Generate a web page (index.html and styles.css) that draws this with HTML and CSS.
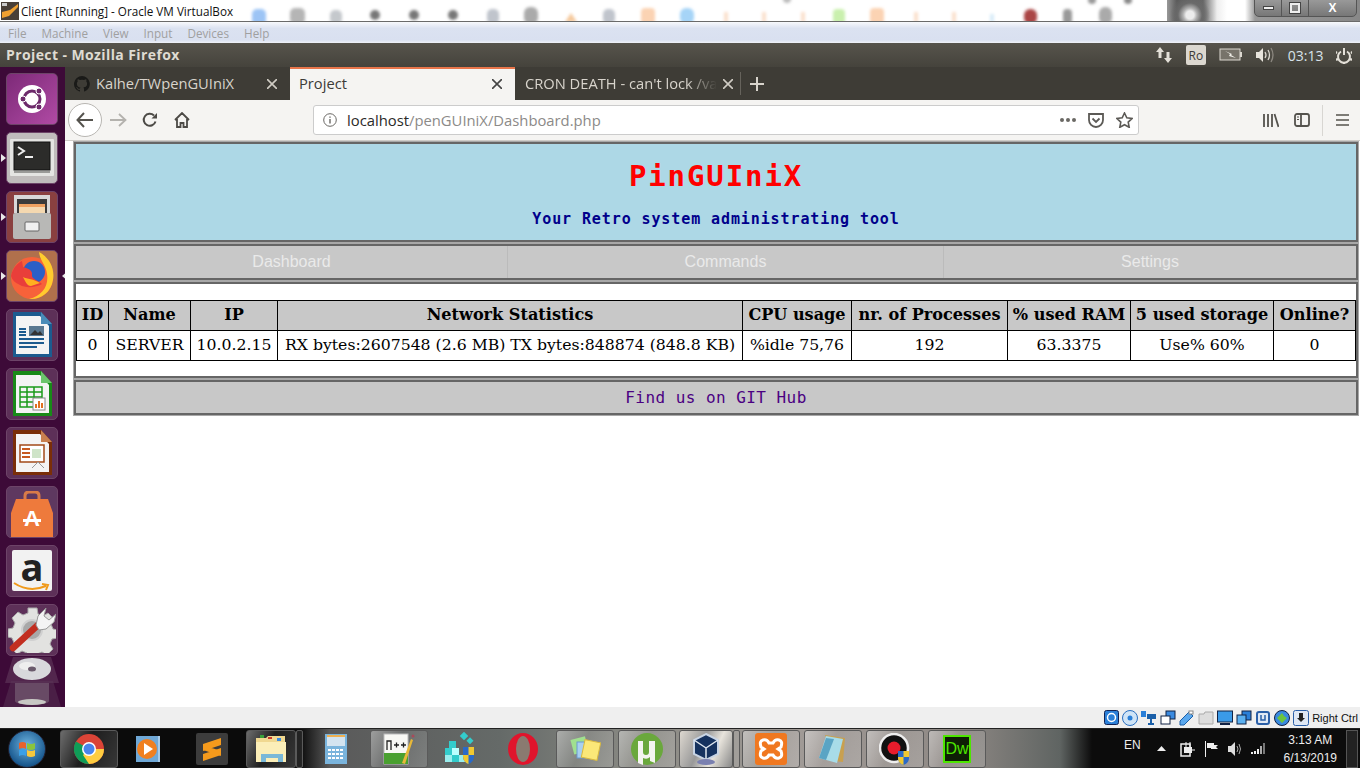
FILE: index.html
```html
<!DOCTYPE html>
<html lang="en">
<head>
    <meta charset="UTF-8">
    <meta name="viewport" content="width=device-width, initial-scale=1.0">
    <title>Project - Mozilla Firefox</title>
    <link rel="stylesheet" href="styles.css">
</head>
<body>

<!-- VirtualBox window title -->
<div class="vbox-title">
    <svg class="blur-strip" width="1130" height="22" viewBox="230 0 1130 22">
        <defs><filter id="soft"><feGaussianBlur stdDeviation="1.800"/></filter></defs>
        <g filter="url(#soft)">
            <rect x="252" y="9" width="14" height="16" rx="5" fill="#9cc4f5"/>
            <rect x="290" y="8" width="15" height="16" rx="5" fill="#b5b5b5"/>
            <rect x="330" y="10" width="12" height="14" rx="5" fill="#c4c8cc"/>
            <circle cx="375" cy="15" r="5" fill="#777"/>
            <circle cx="414" cy="15" r="5" fill="#777"/>
            <circle cx="453" cy="15" r="5" fill="#777"/>
            <rect x="487" y="9" width="12" height="15" rx="5" fill="#c0c4cc"/>
            <rect x="524" y="7" width="14" height="17" rx="6" fill="#aaa"/>
            <path d="M565 22l6-9 6 9z" fill="#f5c99c"/>
            <rect x="603" y="9" width="12" height="15" rx="5" fill="#c0c4cc"/>
            <rect x="641" y="8" width="14" height="16" rx="4" fill="#fbd3b3"/>
            <rect x="680" y="8" width="14" height="16" rx="6" fill="#a6d4f7"/>
            <rect x="724" y="12" width="4" height="10" fill="#fbe0cc"/>
            <rect x="762" y="12" width="4" height="10" fill="#fbe0cc"/>
            <rect x="801" y="12" width="4" height="10" fill="#fbe0cc"/>
            <rect x="833" y="9" width="12" height="15" rx="4" fill="#c9f0ad"/>
            <rect x="870" y="8" width="14" height="16" rx="4" fill="#fbd3b3"/>
            <rect x="914" y="12" width="4" height="10" fill="#fbe0cc"/>
            <rect x="952" y="12" width="4" height="10" fill="#fbe0cc"/>
            <rect x="990" y="14" width="4" height="8" fill="#d8ecf8"/>
            <rect x="1024" y="9" width="13" height="15" rx="6" fill="#a44"/>
            <rect x="1063" y="9" width="9" height="15" rx="4" fill="#999"/>
            <rect x="1099" y="7" width="13" height="17" rx="6" fill="#aaa"/>
            <circle cx="787" cy="-1" r="4" fill="#bbb"/>
            <circle cx="1092" cy="0" r="4" fill="#999"/>
            <circle cx="1128" cy="0" r="4" fill="#888"/>
        </g>
    </svg>
    <div class="dark-peek"></div>
    <svg class="vbox-logo" width="18" height="18" viewBox="0 0 18 18">
        <rect width="18" height="18" fill="#4a4038"/>
        <path d="M1 16l7-2 9-9v-3l-8 6-8 2z" fill="#f0a030"/>
        <rect x="1" y="1" width="5" height="3" fill="#ccc"/>
    </svg>
    <span class="vbox-title-text">Client [Running] - Oracle VM VirtualBox</span>
    <div class="win-buttons">
        <span class="win-btn win-min"><i></i></span>
        <span class="win-btn win-max"><i></i></span>
        <span class="win-btn win-close">X</span>
    </div>
</div>
<div class="vbox-menu">
    <span>File</span><span>Machine</span><span>View</span><span>Input</span><span>Devices</span><span>Help</span>
</div>

<!-- Ubuntu top panel -->
<div class="panel">
    <span class="panel-title">Project - Mozilla Firefox</span>
    <div class="panel-right">
        <svg width="18" height="18" viewBox="0 0 18 18" fill="#e4e0d8"><path d="M5 1l4 5H6.500v6h-3V6H1zM13 17l-4-5h2.500V6h3v6H17z"/></svg>
        <span class="panel-ro">Ro</span>
        <svg width="24" height="14" viewBox="0 0 24 14"><rect x="1" y="1" width="20" height="11" fill="#77736a" stroke="#dcd8d0"/><rect x="21" y="4" width="2" height="5" fill="#dcd8d0"/><path d="M6 3l7 3-1 1 5 3-7-2 1-2z" fill="#f0eee8"/></svg>
        <svg width="20" height="16" viewBox="0 0 20 16" fill="none" stroke="#dcd8d0" stroke-width="1.300"><path d="M1 5h3l4-4v14l-4-4H1z" fill="#e8e4dc" stroke="none"/><path d="M10 5q2 3 0 6M13 3q3 5 0 10"/><path d="M16 1q4 7 0 14" stroke="#8c8880"/></svg>
        <span class="panel-clock">03:13</span>
        <svg width="16" height="17" viewBox="0 0 16 17" fill="none" stroke="#e4e0d8" stroke-width="2"><path d="M5 4.500a6 6 0 1 0 6 0M8 1v7"/><path d="M8 15v2M2 12l-2 1M14 12l2 1M1 6l-2-1M15 6l2-1" stroke-width="2.500"/></svg>
    </div>
</div>

<div class="desktop">
    <!-- Unity launcher -->
    <aside class="launcher">
        <div class="tile tile-ubuntu">
            <svg width="34" height="34" viewBox="0 0 34 34"><circle cx="17" cy="17" r="14" fill="#fff"/><circle cx="17" cy="17" r="8" fill="none" stroke="#6d2a6b" stroke-width="3"/><circle cx="24" cy="9" r="3" fill="#6d2a6b" stroke="#fff"/><circle cx="8" cy="17" r="3" fill="#6d2a6b" stroke="#fff"/><circle cx="24" cy="25" r="3" fill="#6d2a6b" stroke="#fff"/></svg>
        </div>
        <div class="tile tile-term running">
            <svg width="44" height="40" viewBox="0 0 44 40"><rect x="0" y="1" width="44" height="37" rx="1" fill="#e4e4e2"/><rect x="4" y="4" width="36" height="28" fill="#2c2c2a" stroke="#111"/><rect x="4" y="33" width="36" height="2" fill="#9a9a98"/><path d="M8 9l6 4-6 4" fill="none" stroke="#eee" stroke-width="2"/><rect x="15" y="18" width="8" height="2" fill="#eee"/></svg>
        </div>
        <div class="tile tile-files running">
            <svg width="42" height="44" viewBox="0 0 42 44"><rect x="3" y="0" width="36" height="18" fill="#d8d8d8"/><rect x="6" y="4" width="30" height="14" fill="#3a3a3a"/><rect x="8" y="9" width="26" height="9" fill="#eea060"/><rect x="8" y="12" width="26" height="6" fill="#f4d8b0"/><rect x="2" y="18" width="38" height="26" rx="2" fill="#b8b8b6"/><rect x="14" y="27" width="14" height="9" rx="1" fill="#f0f0f0" stroke="#666"/></svg>
        </div>
        <div class="tile tile-firefox running active">
            <svg width="48" height="48" viewBox="0 0 48 48"><circle cx="24" cy="26" r="21" fill="#f7623a"/><path d="M31 0c11 6 16 17 14 28-2 13-13 20-24 19 13-3 20-13 18-25-1-9-7-13-8-22z" fill="#ffcb2e"/><circle cx="26" cy="20" r="11" fill="#2b5fc7"/><path d="M3 24c2-9 7-13 11-15l1 6c4 1 10 3 9 8-1 4 8 6 10 9-7 4-17 4-22 1-5-2-8-5-9-9z" fill="#e93e3a"/><path d="M15 25c4 2 11 2 17 6l-9 3c-4 0-6-5-8-9z" fill="#ffb020"/></svg>
        </div>
        <div class="tile tile-doc">
            <svg width="42" height="46" viewBox="0 0 42 46"><path d="M2 0h28l11 12v33H2z" fill="#1c5b8f"/><path d="M5 4h24l9 10v28H5z" fill="#f4f4f4"/><path d="M30 0l11 12H30z" fill="#4a8cb8"/><path d="M8 17h7M8 20h7M8 23h7M8 27h25M8 31h25M8 35h18" stroke="#1c5b8f" stroke-width="1.800"/><rect x="18" y="14" width="15" height="10" fill="#5a7890"/><path d="M19 23l5-5 3 3 2-2 3 4z" fill="#333"/></svg>
        </div>
        <div class="tile tile-calc">
            <svg width="42" height="46" viewBox="0 0 42 46"><path d="M2 0h28l11 12v33H2z" fill="#188a18"/><path d="M5 4h24l9 10v28H5z" fill="#f4f4f4"/><path d="M30 0l11 12H30z" fill="#6cc46c"/><path d="M9 16h22v20H9zM9 21h22M9 26h22M9 31h22M16 16v20M23 16v20" fill="none" stroke="#1a9a1a" stroke-width="1.500"/><rect x="22" y="27" width="12" height="12" fill="#fff" stroke="#888"/><path d="M25 37v-4M28 37v-7M31 37v-5" stroke="#e07020" stroke-width="2"/></svg>
        </div>
        <div class="tile tile-impress">
            <svg width="42" height="46" viewBox="0 0 42 46"><path d="M2 0h28l11 12v33H2z" fill="#7a2e08"/><path d="M5 4h24l9 10v28H5z" fill="#f4f4f4"/><path d="M30 0l11 12H30z" fill="#c88050"/><rect x="9" y="15" width="24" height="17" fill="#fff" stroke="#a24a18" stroke-width="1.500"/><path d="M11 19h8M11 23h8M11 27h8" stroke="#c85a20" stroke-width="2"/><rect x="21" y="19" width="9" height="9" fill="#cfe4c8"/><path d="M21 38l6-6 6 6" fill="none" stroke="#999"/></svg>
        </div>
        <div class="tile tile-store">
            <svg width="42" height="46" viewBox="0 0 42 46"><path d="M14 10V5q0-4 4-4h6q4 0 4 4v5" fill="none" stroke="#d87a48" stroke-width="3"/><path d="M5 8h32l5 14v24H0V22z" fill="#ee7a3c"/><text class="store-a" x="21" y="35" text-anchor="middle">A</text><rect x="12" y="28" width="18" height="3" fill="#fff"/></svg>
        </div>
        <div class="tile tile-amazon">
            <span class="amazon-a">a</span>
            <svg class="amazon-smile" width="38" height="10" viewBox="0 0 38 10" fill="none" stroke="#f09a1c" stroke-width="2"><path d="M1 1q15 10 32 3M29 2l6 1-2 5"/></svg>
        </div>
        <div class="tile tile-tools">
            <svg width="48" height="46" viewBox="0 0 48 46"><path d="M20 1h9l1 6 5 2 5-3 6 6-3 5 2 5 5 1v8l-6 1-2 5 3 5-6 6-5-3-5 2-1 4h-8l-1-5-5-2-5 3-6-6 3-5-2-5-4-1v-8l5-1 2-5-3-5 6-6 5 3 5-2z" fill="#e2e2e0" stroke="#aaa"/><circle cx="24" cy="23" r="10" fill="#a8a8a8" stroke="#d0d0d0" stroke-width="2"/><path d="M5 41L31 17" stroke="#c22e20" stroke-width="6.500" stroke-linecap="round"/><path d="M28 18l2-9 8-8-2 8 5 4 7-6-2 8-8 7-7 1z" fill="#f4f4f4" stroke="#999"/></svg>
        </div>
        <div class="tile-disc">
            <svg width="58" height="50" viewBox="0 0 58 50">
                <path d="M10 0h38l8 26H2z" fill="#6c4a68" opacity=".45"/>
                <path d="M8 24h42l8 26H0z" fill="#5c3a58" opacity=".45"/>
                <path d="M12 26v18a17 4 0 0 0 34 0V26" fill="#8f7f8c" opacity=".45"/>
                <ellipse cx="29" cy="12" rx="19" ry="11" fill="#d8d8dc"/>
                <ellipse cx="24" cy="9" rx="8" ry="4" fill="#eee"/>
                <ellipse cx="29" cy="12" rx="4" ry="2.500" fill="#6a5a6c"/>
                <ellipse cx="29" cy="45" rx="14" ry="3" fill="#c8c8c4"/>
            </svg>
        </div>
    </aside>

    <div class="firefox">
        <!-- Tabs -->
        <div class="tabs">
            <div class="tab">
                <svg width="16" height="16" viewBox="0 0 16 16" fill="#1a1a18"><path d="M8 0a8 8 0 0 0-2.500 15.600c.4.100.5-.2.500-.4v-1.400c-2.200.5-2.700-1-2.700-1-.4-.9-.9-1.200-.9-1.200-.7-.5.100-.5.100-.5.800.1 1.200.8 1.200.8.700 1.200 1.900.9 2.300.7.100-.5.300-.9.500-1.100-1.800-.2-3.600-.9-3.600-4 0-.9.300-1.600.8-2.100-.1-.2-.4-1 .1-2.100 0 0 .7-.2 2.200.8a7.600 7.600 0 0 1 4 0c1.500-1 2.200-.8 2.200-.8.400 1.100.2 1.900.1 2.100.5.600.8 1.300.8 2.100 0 3.100-1.900 3.700-3.700 3.900.3.300.6.800.6 1.500v2.200c0 .2.100.5.600.4A8 8 0 0 0 8 0z"/></svg>
                <span class="tab-label">Kalhe/TWpenGUIniX</span>
                <svg class="tab-x" width="10" height="10" viewBox="0 0 10 10" stroke="#d0ccc4" stroke-width="1.600"><path d="M0 0l10 10M10 0L0 10"/></svg>
            </div>
            <div class="tab tab-active">
                <span class="tab-label">Project</span>
                <svg class="tab-x" width="10" height="10" viewBox="0 0 10 10" stroke="#444" stroke-width="1.600"><path d="M0 0l10 10M10 0L0 10"/></svg>
            </div>
            <div class="tab tab-fade">
                <span class="tab-label">CRON DEATH - can't lock /va</span>
                <svg class="tab-x" width="10" height="10" viewBox="0 0 10 10" stroke="#d0ccc4" stroke-width="1.600"><path d="M0 0l10 10M10 0L0 10"/></svg>
            </div>
            <span class="tab-sep"></span>
            <svg class="tab-plus" width="14" height="14" viewBox="0 0 14 14" stroke="#d8d4cc" stroke-width="2"><path d="M7 0v14M0 7h14"/></svg>
        </div>

        <!-- Toolbar -->
        <div class="toolbar">
            <span class="back-btn">
                <svg width="18" height="16" viewBox="0 0 18 16" fill="none" stroke="#55534e" stroke-width="2"><path d="M17 8H2M8 1L1.500 8 8 15"/></svg>
            </span>
            <svg class="tb-forward" width="17" height="14" viewBox="0 0 17 14" fill="none" stroke="#b4b2ae" stroke-width="1.800"><path d="M0 7h15M9 1l6.500 6L9 13"/></svg>
            <svg class="tb-reload" width="16" height="16" viewBox="0 0 16 16" fill="none" stroke="#4c4a46" stroke-width="2"><path d="M13.500 9.500A6 6 0 1 1 12 3.500"/><path d="M15 1v5.500H9.500z" fill="#4c4a46" stroke="none"/></svg>
            <svg class="tb-home" width="16" height="16" viewBox="0 0 16 16" fill="none" stroke="#4c4a46" stroke-width="1.800"><path d="M1 8l7-7 7 7M3 7v8h3.500v-4h3v4H13V7"/></svg>
            <div class="urlbar">
                <svg width="14" height="14" viewBox="0 0 14 14" fill="none" stroke="#6a6864"><circle cx="7" cy="7" r="6.300"/><path d="M7 6v4.500M7 3.500v1.300" stroke-width="1.400"/></svg>
                <span class="url"><b>localhost</b>/penGUIniX/Dashboard.php</span>
                <span class="url-dots"><i></i><i></i><i></i></span>
                <svg class="url-pocket" width="16" height="15" viewBox="0 0 16 15" fill="none" stroke="#5c5a56" stroke-width="1.800"><path d="M1 1h14v6a7 7 0 0 1-14 0z"/><path d="M4.500 5.500L8 9l3.500-3.500"/></svg>
                <svg width="17" height="16" viewBox="0 0 17 16" fill="none" stroke="#5c5a56" stroke-width="1.600"><path d="M8.500 1l2.300 4.800 5.200.7-3.800 3.600 1 5.200-4.700-2.600-4.700 2.600 1-5.200L1 6.500l5.200-.7z"/></svg>
            </div>
            <div class="tb-right">
                <svg width="16" height="15" viewBox="0 0 16 15" stroke="#55534e" stroke-width="1.800"><path d="M1 1v13M5 1v13M9 1v13M11.500 1l4 13"/></svg>
                <svg width="16" height="14" viewBox="0 0 16 14" fill="none" stroke="#55534e" stroke-width="1.800"><rect x="1" y="1" width="14" height="12" rx="2"/><path d="M7 1v12"/><path d="M3 4h2M3 6.500h2" stroke-width="1.200"/></svg>
                <span class="tb-sep"></span>
                <svg width="13" height="12" viewBox="0 0 13 12" stroke="#55534e" stroke-width="1.700"><path d="M0 1h13M0 6h13M0 11h13"/></svg>
            </div>
        </div>

        <!-- The page itself -->
        <main class="page">
            <div class="shell">
                <section class="box banner">
                    <h1>PinGUIniX</h1>
                    <p>Your Retro system administrating tool</p>
                </section>
                <nav class="box nav">
                    <a class="nav-item nav-dash">Dashboard</a>
                    <a class="nav-item nav-cmd">Commands</a>
                    <a class="nav-item nav-set">Settings</a>
                </nav>
                <section class="box content">
                    <table>
                        <thead>
                            <tr>
                                <th>ID</th>
                                <th>Name</th>
                                <th>IP</th>
                                <th>Network Statistics</th>
                                <th>CPU usage</th>
                                <th>nr. of Processes</th>
                                <th>% used RAM</th>
                                <th>5 used storage</th>
                                <th>Online?</th>
                            </tr>
                        </thead>
                        <tbody>
                            <tr>
                                <td>0</td>
                                <td>SERVER</td>
                                <td>10.0.2.15</td>
                                <td>RX bytes:2607548 (2.6 MB) TX bytes:848874 (848.8 KB)</td>
                                <td>%idle 75,76</td>
                                <td>192</td>
                                <td>63.3375</td>
                                <td>Use% 60%</td>
                                <td>0</td>
                            </tr>
                        </tbody>
                    </table>
                </section>
                <footer class="box foot">Find us on GIT Hub</footer>
            </div>
        </main>
    </div>
</div>

<!-- VirtualBox status bar -->
<div class="vbox-status">
    <div class="status-icons">
        <svg width="15" height="15" viewBox="0 0 15 15"><rect x=".5" y=".5" width="14" height="14" rx="2" fill="#2a7fd8" stroke="#125"/><circle cx="7.500" cy="7.500" r="4" fill="none" stroke="#fff" stroke-width="1.500"/></svg>
        <svg width="16" height="16" viewBox="0 0 16 16"><circle cx="8" cy="8" r="7.500" fill="#cfe4f7" stroke="#2a6fc0"/><circle cx="8" cy="8" r="2.500" fill="#2a7fd8"/></svg>
        <svg width="16" height="16" viewBox="0 0 16 16" fill="#2a7fd8"><rect x="0" y="1" width="5" height="6"/><rect x="6" y="4" width="9" height="5" fill="#1a5fa8"/><path d="M10 9v6M7 14h6" stroke="#1a5fa8" stroke-width="2"/></svg>
        <svg width="16" height="16" viewBox="0 0 16 16"><rect x="6" y="1" width="9" height="8" fill="#3a8ae0" stroke="#124"/><rect x="1" y="6" width="9" height="8" fill="#fff" stroke="#124"/></svg>
        <svg width="16" height="16" viewBox="0 0 16 16"><path d="M1 11L10 2l4 4-9 9H1z" fill="#5aa8ee" stroke="#1a5fa8"/><rect x="10" y="1" width="4" height="3" fill="#fff" stroke="#888"/></svg>
        <svg width="16" height="14" viewBox="0 0 16 14"><path d="M1 3h5l1-2h8v12H1z" fill="#ddd" stroke="#aaa"/></svg>
        <svg width="16" height="16" viewBox="0 0 16 16"><rect x=".5" y="1" width="15" height="11" fill="#3a9ae8" stroke="#124"/><path d="M3 14h10" stroke="#124" stroke-width="2"/></svg>
        <svg width="16" height="16" viewBox="0 0 16 16"><rect x="6" y="1" width="9" height="9" fill="#2a7fd8" stroke="#124"/><rect x="1" y="5" width="9" height="9" fill="#5ab0f0" stroke="#124"/></svg>
        <svg width="16" height="16" viewBox="0 0 16 16"><rect x="2" y="2" width="12" height="12" rx="2" fill="#dfe8f5" stroke="#2a5fa8" stroke-width="2"/><path d="M6 5v5h4V5" fill="none" stroke="#2a5fa8" stroke-width="1.500"/></svg>
        <svg width="16" height="16" viewBox="0 0 16 16"><circle cx="8" cy="8" r="7.500" fill="#3a8ae0" stroke="#124"/><path d="M3 8l5-5 2 3 3 2-5 5z" fill="#6cc440"/></svg>
        <svg width="16" height="16" viewBox="0 0 16 16"><rect x=".5" y=".5" width="15" height="15" rx="2" fill="#dfe8f5" stroke="#2a5fa8"/><path d="M6 3h4v5h2l-4 4-4-4h2z" fill="#222"/></svg>
    </div>
    <span class="right-ctrl">Right Ctrl</span>
</div>

<!-- Windows taskbar -->
<div class="taskbar">
    <span class="orb">
        <svg width="18" height="18" viewBox="0 0 18 18"><path d="M1 3q4-2 7 0v6q-3-2-7 0z" fill="#e8622c"/><path d="M9 3q4 2 8 0v6q-4 2-8 0z" fill="#8ac43c"/><path d="M1 10q4-2 7 0v6q-3-2-7 0z" fill="#3aa0e8"/><path d="M9 10q4 2 8 0v6q-4 2-8 0z" fill="#f8c83c"/></svg>
    </span>
    <span class="tb-item tb-on tb-chrome">
        <svg width="30" height="30" viewBox="0 0 30 30"><circle cx="15" cy="15" r="15" fill="#db4437"/><path d="M15 15L2 7.500A15 15 0 0 0 15 30l7-15z" fill="#0f9d58"/><path d="M15 15h15a15 15 0 0 1-15 15l-6-9z" fill="#ffcd40"/><circle cx="15" cy="15" r="7" fill="#fff"/><circle cx="15" cy="15" r="5.500" fill="#4a85ed"/></svg>
    </span>
    <span class="tb-item tb-media">
        <svg width="28" height="30" viewBox="0 0 28 30"><rect x="6" y="2" width="20" height="26" fill="#a8cbe8"/><rect x="2" y="2" width="22" height="26" fill="#6fa8d6"/><circle cx="13" cy="15" r="10" fill="#f08020"/><path d="M10 9l9 6-9 6z" fill="#fff"/></svg>
    </span>
    <span class="tb-item tb-sublime">
        <svg width="32" height="32" viewBox="0 0 32 32"><rect width="32" height="32" rx="2" fill="#3c3c3c"/><path d="M7 11l18-6v7L7 18zM7 12l18 6v5L7 17zM7 21l18-6v7L7 28z" fill="#f59a1c"/></svg>
    </span>
    <span class="tb-item tb-on tb-explorer">
        <svg width="32" height="30" viewBox="0 0 32 30"><path d="M1 4h10l2-2h17v26H1z" fill="#f0d890"/><path d="M1 8h30v20H1z" fill="#fbeeb8"/><rect x="5" y="1" width="4" height="3" fill="#3aa03a"/><rect x="13" y="3" width="4" height="2" fill="#c83a2a"/><rect x="22" y="4" width="4" height="3" fill="#3a8ae0"/><path d="M6 28V20h22v8h-5v-4H11v4z" fill="#7ab8d8"/></svg>
    </span>
    <span class="tb-item tb-edge"></span>
    <span class="tb-item tb-calc">
        <svg width="24" height="30" viewBox="0 0 24 30"><rect width="22" height="30" x="1" fill="#7ab4dc"/><rect x="3" y="3" width="18" height="9" fill="#d4e4f0"/><rect x="3" y="1" width="18" height="2" fill="#f0b050"/><path d="M4 16h16M4 20h16M4 24h16" stroke="#fff" stroke-width="2" stroke-dasharray="3 1"/></svg>
    </span>
    <span class="tb-item tb-on tb-npp">
        <svg width="34" height="32" viewBox="0 0 34 32"><rect x="2" y="1" width="24" height="30" fill="#f8f8f4" stroke="#bbb"/><rect x="2" y="20" width="24" height="11" fill="#4aa030"/><path d="M5 17V8h4v9M12 12h5M14.500 9.500v5M19 12h5M21.500 9.500v5" fill="none" stroke="#222" stroke-width="1.300"/><path d="M20 30l9-24 2 1-8 24z" fill="#e8b838"/><circle cx="31" cy="3" r="1.500" fill="#a84a5a"/></svg>
    </span>
    <span class="tb-item tb-reg">
        <svg width="32" height="34" viewBox="0 0 32 34"><rect x="2" y="16" width="7" height="7" fill="#3cc"/><rect x="9" y="16" width="7" height="7" fill="#bff"/><rect x="2" y="23" width="7" height="7" fill="#9ee"/><rect x="9" y="23" width="7" height="7" fill="#3cc"/><rect x="16" y="23" width="7" height="7" fill="#9ee"/><rect x="6" y="9" width="7" height="7" fill="#3cc"/><rect x="18" y="1" width="6" height="6" fill="#3cc" transform="rotate(45 21 4)"/><rect x="25" y="6" width="5" height="5" fill="#3cc" transform="rotate(45 27 8)"/><path d="M20 15h11v9q0 6-5.500 8Q20 30 20 24z" fill="#2a6ac8"/><path d="M25.500 15h5.500v8h-5.500zM20 23h5.500v9Q20 30 20 24z" fill="#f0c830"/></svg>
    </span>
    <span class="tb-item tb-opera">
        <svg width="32" height="34" viewBox="0 0 32 34"><ellipse cx="16" cy="17" rx="15" ry="16" fill="#e0142c"/><ellipse cx="16" cy="17" rx="7" ry="13" fill="#8a7a70"/></svg>
    </span>
    <span class="tb-item tb-on tb-sticky">
        <svg width="32" height="28" viewBox="0 0 32 28"><rect x="3" y="3" width="15" height="15" fill="#a0e090" transform="rotate(-15 10 10)"/><rect x="8" y="7" width="16" height="16" fill="#a8d0f0" stroke="#6a9ad0"/><rect x="14" y="6" width="16" height="18" fill="#fbe878" stroke="#d8b840" transform="rotate(12 22 15)"/></svg>
    </span>
    <span class="tb-item tb-on tb-utorrent">
        <svg width="32" height="32" viewBox="0 0 32 32"><circle cx="16" cy="16" r="16" fill="#6aa83c"/><path d="M7 8h5v11q0 3 3 3t3-3V8h6v22l-5-2v-4q-3 3-7 1v7l-5-2z" fill="#f4f4f0"/></svg>
    </span>
    <span class="tb-item tb-on tb-vbox">
        <svg width="28" height="34" viewBox="0 0 28 34"><path d="M14 2l12 6v14l-12 6-12-6V8z" fill="#15325f" stroke="#c8d4e4" stroke-width="2"/><path d="M14 16L2 8M14 16l12-8M14 16v12" stroke="#e0e8f0" stroke-width="1.500"/><ellipse cx="14" cy="30" rx="9" ry="3" fill="#7a80b0"/></svg>
    </span>
    <span class="tb-item tb-edge"></span>
    <span class="tb-item tb-on tb-xampp">
        <svg width="32" height="32" viewBox="0 0 32 32"><rect width="32" height="32" rx="3" fill="#f07820"/><path d="M8 7q4-1 6 3h4q2-4 6-3t2 7l-3 2 3 2q2 6-2 7t-6-3h-4q-2 4-6 3t-2-7l3-2-3-2Q4 8 8 7z" fill="none" stroke="#fff" stroke-width="3"/></svg>
    </span>
    <span class="tb-item tb-on tb-notepad">
        <svg width="32" height="30" viewBox="0 0 32 30"><path d="M8 1l20 3-2 24-10-1z" fill="#c8a050"/><path d="M9 2l17 3-6 24-18-5z" fill="#a8dce8"/><path d="M2 24L9 4l8 1-8 21z" fill="#5aa4c4"/></svg>
    </span>
    <span class="tb-item tb-on tb-record">
        <svg width="32" height="32" viewBox="0 0 32 32"><circle cx="15" cy="15" r="14" fill="#111" stroke="#eee" stroke-width="2.500"/><circle cx="15" cy="15" r="6.500" fill="#e81c2c"/><path d="M19 18h11v7q0 5-5.500 7-5.500-2-5.500-7z" fill="#2a6ac8"/><path d="M24.500 18H30v6h-5.500zM19 24h5.500v8q-5.500-2-5.500-7z" fill="#f0c830"/></svg>
    </span>
    <span class="tb-item tb-on tb-dw"><span class="dw-mark">Dw</span></span>

    <div class="tray">
        <span class="tray-lang">EN</span>
        <svg class="tray-arrow" width="9" height="5" viewBox="0 0 9 5" fill="#eee"><path d="M4.500 0L9 5H0z"/></svg>
        <svg width="16" height="16" viewBox="0 0 16 16" fill="#eee"><rect x="2" y="3" width="9" height="12" fill="#111" stroke="#eee" stroke-width="1.500"/><rect x="5" y="6" width="8" height="6"/><path d="M7 1v5M11 1v5M13 9h3" stroke="#eee"/></svg>
        <svg width="15" height="16" viewBox="0 0 15 16" fill="#eee"><rect x="1" y="0" width="1" height="16"/><path d="M3 2h7v2l4 0-2 2 2 2H7V7H3z"/></svg>
        <svg width="14" height="14" viewBox="0 0 14 14" fill="#ddd"><path d="M0 4h3l4-4v14l-4-4H0z"/><path d="M9 4q2 3 0 6M11 2q3 5 0 10" fill="none" stroke="#aaa"/></svg>
        <svg width="15" height="11" viewBox="0 0 15 11" fill="#eee"><rect x="0" y="9" width="2" height="2"/><rect x="3" y="8" width="2" height="3"/><rect x="6" y="6" width="2" height="5"/><rect x="9" y="3" width="2" height="8" fill="#aaa"/><rect x="12" y="0" width="2" height="11" fill="#777"/></svg>
        <div class="tray-clock"><span>3:13 AM</span><span>6/13/2019</span></div>
        <span class="show-desktop"></span>
    </div>
</div>

</body>
</html>
```

FILE: styles.css
```css
* {
    box-sizing: border-box;
}
html, body {
    height: 100%;
}
body {
    margin: 0;
    width: 1360px;
    height: 768px;
    overflow: hidden;
    display: flex;
    flex-direction: column;
    font-family: "Open Sans", "Noto Sans", sans-serif;
    background: #fff;
}

/* virtualbox window frame */
.vbox-title {
    position: relative;
    height: 22px;
    flex: none;
    background: #fff;
    border-bottom: 1px solid #6a6a6a;
    display: flex;
    align-items: center;
    overflow: hidden;
}
.blur-strip {
    position: absolute;
    left: 230px;
    top: 0;
}
.dark-peek {
    position: absolute;
    left: 1167px;
    top: 0;
    width: 193px;
    height: 21px;
    background: radial-gradient(circle at 23px 15px, #ececec 0 4px, #b0b0b0 7px, #6a6a6a 12px, transparent 20px), linear-gradient(90deg, #999, #5a5a5a 10px, #666 36px, #eee 50px, #fff 60px, #fff 78px, #999 88px, #888);
}
.vbox-logo {
    position: relative;
    margin-left: 1px;
}
.vbox-title-text {
    position: relative;
    margin-left: 2px;
    font-size: 11.700px;
    color: #111;
    font-family: "Open Sans", sans-serif;
}
.win-buttons {
    position: absolute;
    right: 3px;
    top: -1px;
    width: 103px;
    height: 18px;
    display: flex;
    border: 1px solid #555;
    border-radius: 0 0 5px 5px;
    background: linear-gradient(#999, #777);
}
.win-btn {
    display: flex;
    align-items: center;
    justify-content: center;
    color: #fff;
    font-size: 12px;
    font-weight: bold;
    border-right: 1px solid #555;
}
.win-min, .win-max {
    width: 27px;
}
.win-close {
    flex: 1;
    border-right: none;
    font-family: "Liberation Sans", sans-serif;
}
.win-min i {
    width: 11px;
    height: 4px;
    background: #eee;
    border: 1px solid #444;
}
.win-max i {
    width: 10px;
    height: 10px;
    border: 2px solid #eee;
    outline: 1px solid #444;
}
.vbox-menu {
    height: 21px;
    flex: none;
    background: linear-gradient(#f8f9fc, #dbe2f1 30%, #d9e0f0 85%, #f0f2f8);
    display: flex;
    align-items: center;
    gap: 15px;
    padding: 1px 0 0 8px;
    font-size: 11.700px;
    color: #a0a0a0;
}

/* ubuntu top panel */
.panel {
    height: 24px;
    flex: none;
    background: linear-gradient(#57544c, #45433c);
    display: flex;
    align-items: center;
    justify-content: space-between;
    padding-left: 6px;
}
.panel-title {
    font-size: 14px;
    font-weight: 700;
    letter-spacing: .4px;
    color: #dfdbd2;
    margin-bottom: 2px;
}
.panel-right {
    display: flex;
    align-items: center;
    margin-right: 8px;
    gap: 12.600px;
}
.panel-ro {
    width: 20px;
    height: 20px;
    background: #dcd8d0;
    color: #3c3b37;
    font-size: 12px;
    display: flex;
    align-items: center;
    justify-content: center;
    border-radius: 2px;
}
.panel-clock {
    font-size: 14px;
    color: #d8e2ea;
}

/* launcher + browser */
.desktop {
    flex: 1;
    display: flex;
    min-height: 0;
}
.launcher {
    width: 65px;
    flex: none;
    background: #3d0a38;
    padding: 6px 0 0 6px;
    display: flex;
    flex-direction: column;
    gap: 7px;
    overflow: hidden;
}
.tile {
    position: relative;
    width: 52px;
    height: 52px;
    flex: none;
    border-radius: 5px;
    background: #5d3058;
    border: 1px solid #6d4468;
    display: flex;
    align-items: center;
    justify-content: center;
}
.running::before {
    content: "";
    position: absolute;
    left: -6px;
    top: 21px;
    border: 4px solid transparent;
    border-left: 5px solid #e8e8e8;
}
.active::after {
    content: "";
    position: absolute;
    right: -10px;
    top: 21px;
    border: 4px solid transparent;
    border-right: 5px solid #e8e8e8;
}
.tile-ubuntu {
    background: linear-gradient(135deg, #7d2a78, #b04aa4);
}
.tile-term {
    background: #c0bcbc;
}
.tile-files {
    background: #8a4040;
}
.tile-firefox {
    background: #b0704c;
}
.tile-store {
    background: #5e3860;
    align-items: flex-end;
}
.tile-amazon {
    flex-direction: column;
}
.tile-amazon::before {
    content: "";
    position: absolute;
    inset: 4px 5px 5px;
    background: #f2f2f2;
    border-radius: 2px;
}
.amazon-a {
    position: relative;
    font-family: "Open Sans", sans-serif;
    font-weight: 700;
    font-size: 38px;
    line-height: 32px;
    color: #222;
}
.amazon-smile {
    position: relative;
}
.store-a {
    font-family: "Liberation Sans", sans-serif;
    font-weight: bold;
    font-size: 22px;
    fill: #fff;
}
.tile-disc {
    margin: -6px 0 0 -3px;
}
.firefox {
    flex: 1;
    min-width: 0;
    display: flex;
    flex-direction: column;
}
.tabs {
    height: 33px;
    flex: none;
    background: #3e3c36;
    display: flex;
    align-items: stretch;
    font-size: 14.700px;
}
.tab {
    width: 225px;
    display: flex;
    align-items: center;
    padding-left: 9px;
    gap: 6px;
    color: #d8d4cc;
}
.tab-label {
    flex: 1;
    white-space: nowrap;
    margin-top: -2px;
}
.tab-x {
    flex: none;
    margin-right: 13px;
}
.tab-active {
    background: #f5f4f2;
    color: #3c3b37;
    border-top: 2px solid #e8754a;
    padding-bottom: 2px;
}
.tab-fade {
    padding-left: 10px;
}
.tab-fade .tab-label {
    -webkit-mask-image: linear-gradient(90deg, #000 84%, transparent);
    mask-image: linear-gradient(90deg, #000 84%, transparent);
}
.tab-sep {
    width: 1px;
    margin: 5px 0;
    background: #66635c;
}
.tab-plus {
    align-self: center;
    margin-left: 9px;
}
.toolbar {
    height: 41px;
    flex: none;
    background: #f5f4f2;
    border-bottom: 1px solid #cfcdc9;
    display: flex;
    align-items: center;
    padding-left: 3px;
}
.back-btn {
    width: 34px;
    height: 34px;
    border-radius: 50%;
    border: 1px solid #b8b6b2;
    background: #fff;
    display: flex;
    align-items: center;
    justify-content: center;
}
.tb-forward {
    margin-left: 8px;
}
.tb-reload {
    margin-left: 15px;
}
.tb-home {
    margin-left: 16px;
}
.urlbar {
    width: 826px;
    height: 30px;
    margin-left: 123px;
    background: #fff;
    border: 1px solid #ccc;
    border-radius: 3px;
    display: flex;
    align-items: center;
    padding: 0 5px 0 9px;
    gap: 6px;
    font-size: 14.800px;
}
.url {
    flex: 1;
    margin-left: 4px;
    color: #8c8a88;
}
.url b {
    font-weight: 400;
    color: #2b2a28;
}
.url-dots {
    display: flex;
    gap: 2px;
    margin-right: 6px;
}
.url-dots i {
    width: 4px;
    height: 4px;
    border-radius: 50%;
    background: #6a6864;
}
.url-pocket {
    margin-right: 6px;
}
.tb-right {
    display: flex;
    align-items: center;
    margin-left: 124px;
    gap: 15px;
}
.tb-sep {
    width: 1px;
    height: 31px;
    background: #d8d6d2;
    margin: 0 -2px 0 -3px;
}
.page {
    flex: 1;
    background: #fff;
    padding: 0 1px 0 8px;
    min-height: 0;
}
.shell {
    background: #a8a8a8;
    padding: 1px;
    display: flex;
    flex-direction: column;
    gap: 2px;
}
.box {
    border: 2px solid #666;
}
.banner {
    height: 100px;
    background: #add8e6;
    text-align: center;
}
.banner h1 {
    margin: 13px 0 0;
    font-family: "DejaVu Sans Mono", monospace;
    font-size: 29px;
    line-height: 38px;
    font-weight: bold;
    color: #f00;
    letter-spacing: 1.900px;
}
.banner p {
    margin: 14px 0 0;
    font-family: "DejaVu Sans Mono", monospace;
    font-weight: bold;
    font-size: 15px;
    line-height: 20px;
    letter-spacing: .9px;
    color: #00008b;
}
.nav {
    height: 36px;
    background: #c8c8c8;
    display: flex;
}
.nav-item {
    display: flex;
    align-items: center;
    justify-content: center;
    font-family: "Liberation Sans", Arial, sans-serif;
    font-size: 16px;
    color: #eaeaea;
    border-right: 1px solid #bbb;
}
.nav-dash {
    width: 432px;
}
.nav-cmd {
    width: 436px;
}
.nav-set {
    flex: 1;
    border-right: none;
}
.content {
    height: 96px;
    padding: 16px 0 0;
    background: #fff;
}
table {
    width: 1280px;
    table-layout: fixed;
    border-collapse: collapse;
    font-family: "DejaVu Serif", serif;
    font-size: 15.700px;
    color: #000;
}
th, td {
    border: 1px solid #000;
    text-align: center;
    padding: 0 0 2px;
    white-space: nowrap;
    overflow: hidden;
}
th {
    height: 30px;
    background: #c8c8c8;
    font-size: 16.100px;
}
td {
    height: 30px;
}
th:nth-child(1) { width: 32px; }
th:nth-child(2) { width: 82px; }
th:nth-child(3) { width: 87px; }
th:nth-child(4) { width: 465px; }
th:nth-child(5) { width: 109px; }
th:nth-child(6) { width: 156px; }
th:nth-child(7) { width: 123px; }
th:nth-child(8) { width: 143px; }
th:nth-child(9) { width: 82px; }
.foot {
    height: 35px;
    background: #c8c8c8;
    display: flex;
    align-items: center;
    justify-content: center;
    font-family: "DejaVu Sans Mono", monospace;
    font-size: 16px;
    letter-spacing: .45px;
    color: #4b0082;
}

/* vbox status bar */
.vbox-status {
    height: 21px;
    flex: none;
    background: #efefef;
    display: flex;
    align-items: center;
    justify-content: flex-end;
    padding-right: 2px;
    gap: 3px;
}
.status-icons {
    display: flex;
    align-items: center;
    gap: 3px;
}
.right-ctrl {
    font-family: "Liberation Sans", sans-serif;
    font-size: 11px;
    color: #111;
    white-space: nowrap;
}

/* windows taskbar */
.taskbar {
    height: 40px;
    flex: none;
    background: linear-gradient(90deg, #0b0b0b 0, #0b0b0b 300px, #5a5a5a 330px, #656a68 500px, #8a8a84 640px, #a09a96 800px, #8e8884 960px, #5f6462 1060px, #0c0c0c 1092px);
    border-top: 1px solid #222;
    display: flex;
    align-items: center;
    padding: 0 2px 0 8px;
    overflow: hidden;
}
.orb {
    width: 38px;
    height: 38px;
    flex: none;
    border-radius: 50%;
    background: radial-gradient(circle at 50% 40%, #6fb4e0, #1a5a90 70%, #0a2a48);
    border: 1px solid #223;
    display: flex;
    align-items: center;
    justify-content: center;
    margin-right: 14px;
}
.tb-item {
    height: 38px;
    flex: none;
    display: flex;
    align-items: center;
    justify-content: center;
}
.tb-on {
    border: 1px solid #5a5a5a;
    border-radius: 3px;
    background: linear-gradient(115deg, rgba(255,255,255,.4), rgba(255,255,255,.08) 45%, rgba(255,255,255,.18));
}
.tb-chrome { width: 58px; }
.tb-media { width: 60px; }
.tb-sublime { width: 68px; }
.tb-explorer { width: 50px; }
.tb-edge {
    width: 7px;
    border: 1px solid #5a5a5a;
    border-radius: 2px;
    background: rgba(255,255,255,.1);
}
.tb-calc { width: 66px; }
.tb-npp { width: 58px; margin-left: 1px; }
.tb-reg { width: 62px; }
.tb-opera { width: 66px; }
.tb-sticky { width: 58px; }
.tb-utorrent { width: 58px; margin-left: 4px; }
.tb-vbox { width: 54px; margin-left: 3px; background: linear-gradient(115deg, #ddd8d0, #999 40%, #e8e4dc 65%, #888); }
.tb-xampp { width: 58px; margin-left: 2px; }
.tb-notepad { width: 58px; margin-left: 4px; }
.tb-record { width: 58px; margin-left: 4px; }
.tb-dw { width: 58px; margin-left: 4px; }
.dw-mark {
    width: 28px;
    height: 28px;
    background: #0e1f05;
    border: 2px solid #4de600;
    color: #4de600;
    font-family: "Liberation Sans", sans-serif;
    font-size: 16px;
    line-height: 24px;
    text-align: center;
}
.tray {
    margin-left: auto;
    display: flex;
    align-items: center;
    gap: 9px;
    color: #eee;
    font-family: "Liberation Sans", sans-serif;
    font-size: 12px;
}
.tray-lang {
    margin: -8px 7px 0 0;
}
.tray-arrow {
    margin-right: 4px;
}
.tray-clock {
    display: flex;
    flex-direction: column;
    align-items: center;
    line-height: 18px;
    margin-left: 9px;
}
.show-desktop {
    width: 12px;
    height: 38px;
    background: #222;
    border: 1px solid #555;
}
```
